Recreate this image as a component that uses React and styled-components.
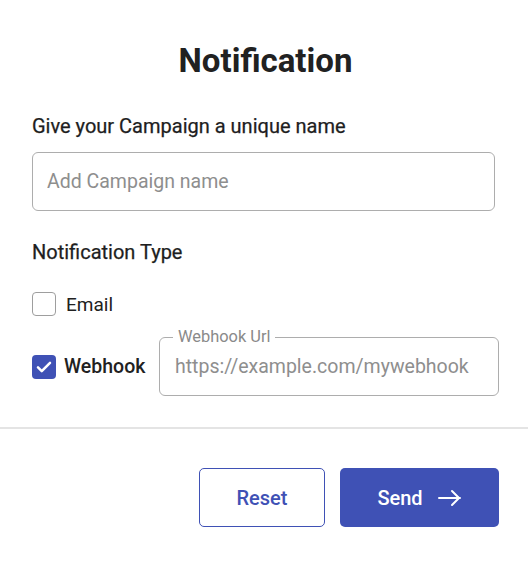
import React from "react";
import styled, { createGlobalStyle } from "styled-components";

const Global = createGlobalStyle`
  html, body { margin: 0; padding: 0; background: #fff; }
  body { font-family: Roboto, "Noto Sans", Arial, sans-serif; color: #212121; }
  * { box-sizing: border-box; }
`;

const Page = styled.div`
  width: 528px;
  display: flex;
  flex-direction: column;
`;

const Body = styled.div`
  display: flex;
  flex-direction: column;
  padding: 41px 29px 0 32px;
`;

const Title = styled.h1`
  margin: 0;
  font-size: 33px;
  line-height: 40px;
  font-weight: 700;
  text-align: center;
  color: #212121;
  padding-left: 0;
`;

const Label = styled.div`
  font-size: 20px;
  line-height: 24px;
  font-weight: 400;
  color: #1e1e1e;
  -webkit-text-stroke: 0.25px #1e1e1e;
  margin-top: ${(p) => p.$mt}px;
`;

const TextInput = styled.input`
  margin-top: 14px;
  width: 463px;
  height: 59px;
  border: 1px solid #adadad;
  border-radius: 6px;
  padding: 0 14px;
  font-family: inherit;
  font-size: 19.5px;
  color: #212121;
  outline: none;
  &::placeholder { color: #8e8e8e; }
`;

const OptionRow = styled.div`
  display: flex;
  align-items: center;
  height: ${(p) => p.$h}px;
  margin-top: ${(p) => p.$mt}px;
`;

const Box = styled.span`
  width: 24px;
  height: 24px;
  border-radius: 4px;
  flex: none;
  display: flex;
  align-items: center;
  justify-content: center;
  border: ${(p) => (p.$checked ? "none" : "1.5px solid #9e9e9e")};
  background: ${(p) => (p.$checked ? "#3f51b5" : "#fff")};
`;

const OptionText = styled.span`
  margin-left: ${(p) => (p.$strong ? 8 : 10)}px;
  font-size: ${(p) => (p.$strong ? 19.5 : 19)}px;
  font-weight: ${(p) => (p.$strong ? 500 : 400)};
  color: #212121;
`;

const Fieldset = styled.fieldset`
  margin: -8px 0 0 auto;
  padding: 0 14px;
  width: 340px;
  height: 67px;
  border: 1px solid #adadad;
  border-radius: 6px;
  display: flex;
  align-items: center;
`;

const Legend = styled.legend`
  padding: 0 5px;
  margin-left: -1px;
  font-size: 16.4px;
  line-height: 16px;
  color: #8a8a8a;
`;

const UrlInput = styled.input`
  border: none;
  outline: none;
  width: 100%;
  padding: 0 1px;
  margin-top: -8px;
  font-family: inherit;
  font-size: 19.5px;
  color: #212121;
  &::placeholder { color: #8e8e8e; }
`;

const Divider = styled.hr`
  margin: 31px 0 0;
  border: none;
  height: 2px;
  background: #e4e4e4;
  width: 100%;
`;

const Actions = styled.div`
  display: flex;
  justify-content: flex-end;
  gap: 15px;
  padding: 39px 29px 0 0;
`;

const Button = styled.button`
  height: 59px;
  width: ${(p) => p.$w}px;
  border-radius: 5px;
  font-family: inherit;
  font-size: 20px;
  font-weight: 500;
  display: flex;
  align-items: center;
  justify-content: center;
  gap: 15px;
  cursor: pointer;
  padding: 0;
  border: ${(p) => (p.$primary ? "none" : "1.5px solid #3f51b5")};
  background: ${(p) => (p.$primary ? "#3f51b5" : "#fff")};
  color: ${(p) => (p.$primary ? "#fff" : "#3f51b5")};
`;

export default function App() {
  return (
    <Page>
      <Global />
      <Body>
        <Title>Notification</Title>
        <Label $mt={33}>Give your Campaign a unique name</Label>
        <TextInput placeholder="Add Campaign name" />
        <Label $mt={29}>Notification Type</Label>
        <OptionRow $h={48} $mt={16}>
          <Box />
          <OptionText>Email</OptionText>
        </OptionRow>
        <OptionRow $h={59} $mt={9}>
          <Box $checked>
            <svg width="18" height="18" viewBox="0 0 24 24">
              <path d="M4 12.5l5 5L20 6.5" fill="none" stroke="#fff" strokeWidth="3.4" strokeLinecap="round" strokeLinejoin="round" />
            </svg>
          </Box>
          <OptionText $strong>Webhook</OptionText>
          <Fieldset>
            <Legend>Webhook Url</Legend>
            <UrlInput placeholder="https://example.com/mywebhook" />
          </Fieldset>
        </OptionRow>
      </Body>
      <Divider />
      <Actions>
        <Button $w={126}>Reset</Button>
        <Button $w={159} $primary>
          Send
          <svg width="24" height="24" viewBox="0 0 24 24">
            <path d="M1 12h21M14 5l7 7-7 7" fill="none" stroke="#fff" strokeWidth="2" strokeLinecap="round" strokeLinejoin="round" />
          </svg>
        </Button>
      </Actions>
    </Page>
  );
}
